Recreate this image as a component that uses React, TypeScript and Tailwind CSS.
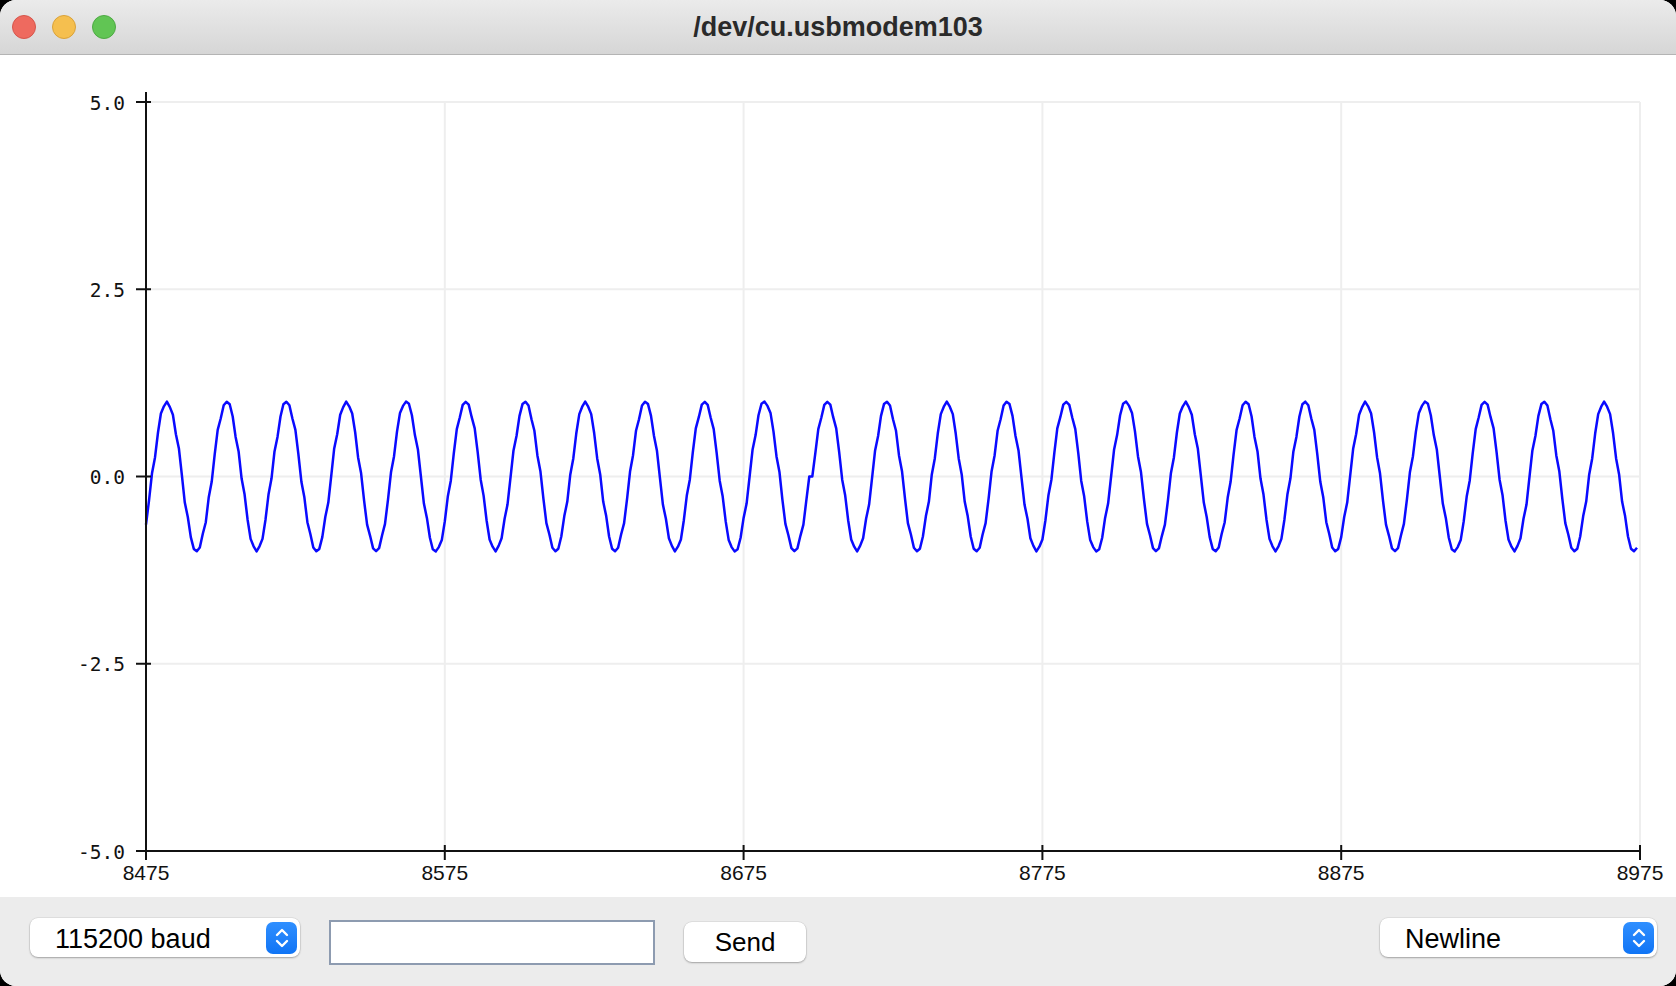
import React from "react";

// plot geometry, page pixels
const X0 = 146;
const X1 = 1640;
const YTOP = 102;
const YBOT = 851;
const YZERO = (YTOP + YBOT) / 2;
const PX_PER_SAMPLE = (X1 - X0) / 500;
const PX_PER_UNIT = (YBOT - YTOP) / 10;

const xTicks = [8475, 8575, 8675, 8775, 8875, 8975];
const yTicks = [5, 2.5, 0, -2.5, -5];

const xPos = (v: number) => X0 + ((v - 8475) / 500) * (X1 - X0);
const yPos = (v: number) => YZERO - v * PX_PER_UNIT;

// sine, 20 samples a period, with one repeated sample at the glitch.
// a little timing jitter so the line has the kinks of real samples
const wavePoints = (() => {
    const pts: string[] = [];
    for (let n = 0; n < 500; n++) {
        const shift = n <= 222 ? 2 : 3;
        const jitter = n === 222 || n === 223 ? 0 : (((n * 37) % 11) / 10 - 0.5) * 0.45;
        const v = Math.sin((2 * Math.PI * (n - shift + jitter)) / 20);
        pts.push(`${(X0 + n * PX_PER_SAMPLE).toFixed(1)},${yPos(v).toFixed(1)}`);
    }
    return pts.join(" ");
})();

const Stepper = () => (
    <div className="w-[31px] h-[32px] rounded-[7px] bg-gradient-to-b from-[#2f8fff] to-[#0f74f5] flex items-center justify-center">
        <svg width="16" height="22" viewBox="0 0 16 22" fill="none" stroke="white" strokeWidth="2.4" strokeLinecap="round" strokeLinejoin="round">
            <path d="M3 8 L8 3 L13 8" />
            <path d="M3 14 L8 19 L13 14" />
        </svg>
    </div>
);

const Select = ({ label, width }: { label: string; width: string }) => (
    <div className={`${width} h-[39px] rounded-[8px] bg-white shadow-[0_1px_2px_rgba(0,0,0,0.28)] ring-[0.5px] ring-black/10 flex items-center justify-between pl-[25px] pr-[3px]`}>
        <span className="text-[27px] leading-none text-black pt-[3px]" style={{ fontFamily: '"Liberation Sans", Arial, sans-serif' }}>
            {label}
        </span>
        <Stepper />
    </div>
);

const Plot = () => (
    <svg width="1676" height="842" viewBox="0 55 1676 842" className="block">
        {/* grid */}
        {xTicks.slice(1).map((t) => (
            <line key={`gx${t}`} x1={xPos(t)} y1={YTOP} x2={xPos(t)} y2={YBOT} stroke="#eeeeee" strokeWidth="2" />
        ))}
        {yTicks.slice(0, 4).map((t) => (
            <line key={`gy${t}`} x1={X0} y1={yPos(t)} x2={X1} y2={yPos(t)} stroke="#eeeeee" strokeWidth="2" />
        ))}

        {/* signal */}
        <polyline points={wavePoints} fill="none" stroke="#0a0aff" strokeWidth="2.5" strokeLinejoin="round" />

        {/* axes */}
        <line x1={X0} y1={92} x2={X0} y2={YBOT + 1} stroke="#111" strokeWidth="2" />
        <line x1={136} y1={YBOT} x2={X1} y2={YBOT} stroke="#111" strokeWidth="2" />
        {yTicks.map((t) => (
            <line key={`ty${t}`} x1={136} y1={yPos(t)} x2={151} y2={yPos(t)} stroke="#111" strokeWidth="2" />
        ))}
        {xTicks.map((t) => (
            <line key={`tx${t}`} x1={xPos(t)} y1={845} x2={xPos(t)} y2={860} stroke="#111" strokeWidth="2" />
        ))}

        {/* labels */}
        {yTicks.map((t) => (
            <text
                key={`ly${t}`}
                x={125}
                y={yPos(t) + 7.5}
                textAnchor="end"
                fontSize="19.5"
                fill="#111"
                style={{ fontFamily: '"DejaVu Sans Mono", monospace' }}
            >
                {t.toFixed(1)}
            </text>
        ))}
        {xTicks.map((t) => (
            <text
                key={`lx${t}`}
                x={xPos(t)}
                y={880}
                textAnchor="middle"
                fontSize="21"
                fill="#111"
                style={{ fontFamily: '"Liberation Sans", Arial, sans-serif' }}
            >
                {t}
            </text>
        ))}
    </svg>
);

export default function App() {
    return (
        <div className="w-[1676px] h-[986px] bg-black">
            <div className="w-full h-full rounded-[16px] overflow-hidden flex flex-col bg-white">
                {/* title bar */}
                <div className="h-[55px] shrink-0 grid grid-cols-[1fr_auto_1fr] items-center bg-gradient-to-b from-[#ebebeb] to-[#d6d6d6] border-b border-[#b4b4b4]">
                    <div className="flex items-center gap-[16px] pl-[12px]">
                        <span className="w-[24px] h-[24px] rounded-full bg-[#ee6a5f] border border-[#d5564c]" />
                        <span className="w-[24px] h-[24px] rounded-full bg-[#f5bf4f] border border-[#d9a23a]" />
                        <span className="w-[24px] h-[24px] rounded-full bg-[#61c554] border border-[#4ea944]" />
                    </div>
                    <h1
                        className="text-[27px] font-bold text-[#2a2a2a] leading-none"
                        style={{ fontFamily: '"Liberation Sans", Arial, sans-serif' }}
                    >
                        /dev/cu.usbmodem103
                    </h1>
                    <div />
                </div>

                {/* plotter */}
                <div className="h-[842px] shrink-0 bg-white">
                    <Plot />
                </div>

                {/* controls */}
                <div className="flex-1 bg-[#ececec] flex items-start pl-[30px] pr-[19px] pt-[21px]">
                    <Select label="115200 baud" width="w-[270px]" />
                    <input
                        className="ml-[29px] mt-[2px] w-[326px] h-[45px] bg-white border-2 border-[#8d9bb0] outline-none"
                        type="text"
                    />
                    <button
                        className="ml-[29px] mt-[4px] w-[122px] h-[40px] rounded-[8px] bg-white shadow-[0_1px_2px_rgba(0,0,0,0.28)] ring-[0.5px] ring-black/10 text-[26px] leading-none text-black"
                        style={{ fontFamily: '"Liberation Sans", Arial, sans-serif' }}
                    >
                        Send
                    </button>
                    <div className="flex-1" />
                    <Select label="Newline" width="w-[277px]" />
                </div>
            </div>
        </div>
    );
}
